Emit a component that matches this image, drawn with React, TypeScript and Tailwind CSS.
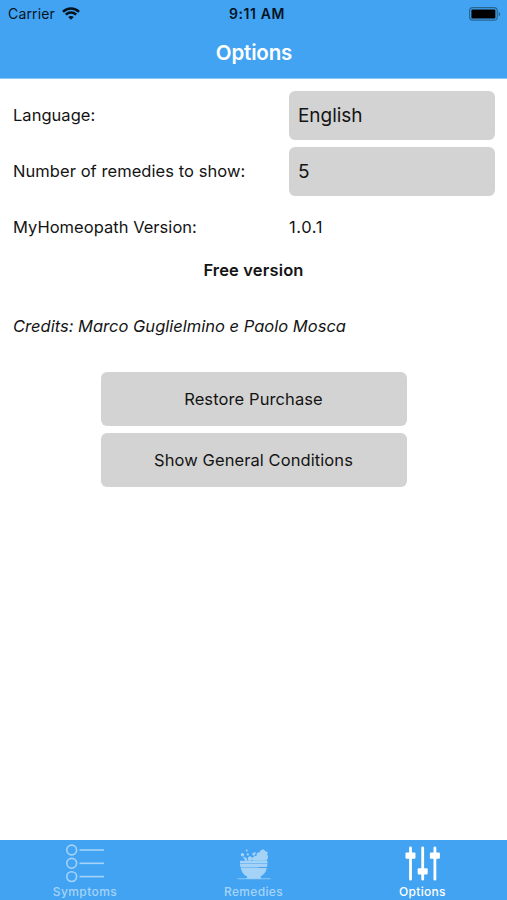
import type { ReactNode } from 'react';

function WifiIcon() {
  return (
    <svg className="h-[14px] w-[18px]" viewBox="0 0 18 14" fill="none" stroke="#04141f" strokeWidth="2.5">
      <path d="M1 4.8C5.4 .4 12.6 .4 17 4.8" />
      <path d="M3.8 7.7c2.9-2.8 7.5-2.8 10.4 0" />
      <path d="M6.2 10c1.6-1.5 4-1.5 5.6 0L9 12.8z" fill="#04141f" stroke="none" />
    </svg>
  );
}

function BatteryIcon() {
  return (
    <svg className="h-[14px] w-[32px]" viewBox="0 0 32 14">
      <rect x=".6" y=".6" width="27.6" height="12.6" rx="3.2" fill="none" stroke="#28658f" strokeWidth="1.2" />
      <rect x="2.4" y="2.4" width="24" height="9" rx="1.2" fill="#000" />
      <path d="M29.6 4.7c2 .8 2 3.8 0 4.6z" fill="#28658f" />
    </svg>
  );
}

function ListIcon() {
  return (
    <svg className="h-[39px] w-[40px]" viewBox="0 0 40 39" fill="none" stroke="currentColor">
      {[6, 19.3, 32.6].map((y) => (
        <g key={y}>
          <circle cx="6.7" cy={y} r="4.9" strokeWidth="1.6" />
          <path d={`M14.5 ${y}H39`} strokeWidth="1.6" />
        </g>
      ))}
    </svg>
  );
}

function BowlIcon() {
  return (
    <svg className="h-[39px] w-[40px]" viewBox="0 0 40 39" fill="currentColor">
      <path d="M6 16.8h27.5v2.6H6zM6 20h27.5l-.5 3H6.4zM6.6 23.5h18v.6h8.2c-.8 4.4-3.2 6.9-6.2 8.5l.6 2.2H12.4l.8-2.2c-3.3-1.6-5.8-4.6-6.6-9.1z" />
      <path d="M3.5 34.3h33v.9h-33z" opacity=".75" />
      <path d="M18.4 16.8c-1-3.6 1.7-5.5 4.2-4.7-.5-2.6 1.1-4.3 3.2-3.9.6-3 4.2-3.6 5.6-1 2.4-.2 3 2 1.6 3.4 1.8 1.6 1 4.7-.8 6.2zM11.2 16.8l-2.4-4.2 3.8 1.3.9 2.9zM14.2 16.8l-.3-3.6 2.7-1.3 2 2.6-1.6 2.3zM18.2 9.2l3.8-1.2-1.2 3.4-2 .2z" />
      <circle cx="8.4" cy="10.8" r="1.7" />
      <circle cx="12.7" cy="6.4" r="1" />
      <circle cx="13.8" cy="10.4" r="1.1" />
    </svg>
  );
}

function SlidersIcon() {
  return (
    <svg className="h-[39px] w-[40px]" viewBox="0 0 40 39">
      <path d="M7.5 3.8v31.4M19.7 3.8v31.4M31.9 3.8v31.4" stroke="currentColor" strokeWidth="2.8" strokeLinecap="round" />
      <g fill="currentColor">
        <rect x="2.5" y="8.4" width="10" height="6.4" rx="1" />
        <rect x="14.7" y="24.2" width="10" height="6.4" rx="1" />
        <rect x="26.9" y="8.4" width="10" height="6.4" rx="1" />
      </g>
    </svg>
  );
}

function Tab({ icon, label, active = false }: { icon: ReactNode; label: ReactNode; active?: boolean }) {
  return (
    <button className={`flex flex-1 flex-col items-center pt-1 ${active ? 'text-white' : 'text-[#a5d3f8]'}`}>
      {icon}
      <span className="mt-[2px] text-[12px] leading-[14px] font-medium whitespace-nowrap">{label}</span>
    </button>
  );
}

export default function App() {
  return (
    <div className="flex h-[900px] w-[507px] flex-col overflow-hidden bg-white font-['Inter',sans-serif] text-[#141414]">
      <header className="h-[79px] shrink-0 border-b border-[#8bc9f8] bg-[#42a3f2]">
        <div className="grid h-[27px] grid-cols-3 items-center pr-[6px] pl-2 text-[#04141f]">
          <div className="flex items-center gap-[7px] text-[14px]">
            <span className="tracking-[0.15px]">Carrier</span>
            <WifiIcon />
          </div>
          <div className="pl-[5px] text-center text-[14px] font-semibold tracking-[0.6px]">9:11 AM</div>
          <div className="flex justify-end"><BatteryIcon /></div>
        </div>
        <h1 className="pl-px text-center text-[20.5px] leading-[51px] font-semibold tracking-[-0.15px] text-white">Options</h1>
      </header>

      <main className="flex-1 px-[13px] pt-3 text-[16.5px] tracking-[0.03px]">
        <div className="grid grid-cols-[276px_206px] items-center gap-y-[7px]">
          <span>Language:</span>
          <div className="flex h-[49px] items-center rounded-[6px] bg-[#d3d3d3] px-[9px] pt-[2px] text-[19px] tracking-[-0.05px]">English</div>
          <span className="tracking-[0.06px]">Number of remedies to show:</span>
          <div className="flex h-[49px] items-center rounded-[6px] bg-[#d3d3d3] px-[9px] pt-[2px] text-[19px]">5</div>
          <span className="leading-[49px]">MyHomeopath Version:</span>
          <span className="leading-[49px] tracking-[0.6px]">1.0.1</span>
        </div>
        <p className="mt-[5px] text-center leading-[26px] font-semibold tracking-[0.15px]">Free version</p>
        <p className="mt-[30px] leading-[26px] tracking-[0.01px] italic">Credits: Marco Guglielmino e Paolo Mosca</p>
        <div className="mx-auto mt-[33px] flex w-[306px] flex-col gap-[7px]">
          <button className="h-[54px] rounded-[6px] bg-[#d3d3d3] tracking-[0.1px]">Restore Purchase</button>
          <button className="h-[54px] rounded-[6px] bg-[#d3d3d3] tracking-[0.08px]">Show General Conditions</button>
        </div>
      </main>

      <nav className="flex h-[60px] shrink-0 bg-[#42a3f2]">
        <Tab icon={<ListIcon />} label={<span className="pl-px tracking-[0.4px]">Symptoms</span>} />
        <Tab icon={<BowlIcon />} label={<span className="tracking-[0.35px]">Remedies</span>} />
        <Tab icon={<SlidersIcon />} label={<span className="tracking-[0.3px]">Options</span>} active />
      </nav>
    </div>
  );
}
